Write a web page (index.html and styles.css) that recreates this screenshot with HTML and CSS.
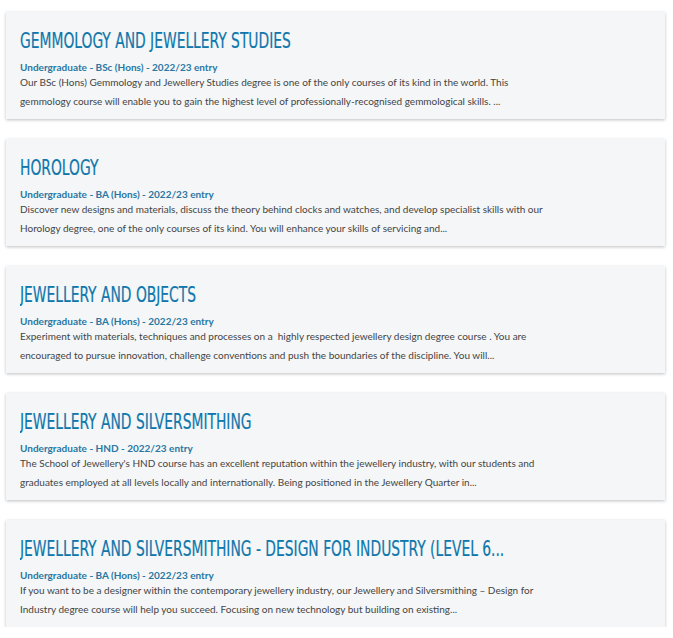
FILE: index.html
```html
<!doctype html>
<html>
  <head>
    <meta charset='utf-8'>
    <title>courses</title>
    <link rel="stylesheet" href="styles.css">
  </head>
  <body>
    <div class='results'>

      <div class='course'>
        <h2 class='course-title'><span>Gemmology and Jewellery Studies</span></h2>
        <div class='course-meta'>Undergraduate - BSc (Hons) - 2022/23 entry</div>
        <p class='course-text'>Our BSc (Hons) Gemmology and Jewellery Studies degree is one of the only courses of its kind in the world. This gemmology course will enable you to gain the highest level of professionally-recognised gemmological skills. ...</p>
      </div>

      <div class='course'>
        <h2 class='course-title'><span>Horology</span></h2>
        <div class='course-meta'>Undergraduate - BA (Hons) - 2022/23 entry</div>
        <p class='course-text'>Discover new designs and materials, discuss the theory behind clocks and watches, and develop specialist skills with our Horology degree, one of the only courses of its kind. You will enhance your skills of servicing and...</p>
      </div>

      <div class='course'>
        <h2 class='course-title'><span>Jewellery and Objects</span></h2>
        <div class='course-meta'>Undergraduate - BA (Hons) - 2022/23 entry</div>
        <p class='course-text'>Experiment with materials, techniques and processes on a&nbsp; highly respected jewellery design degree course . You are encouraged to pursue innovation, challenge conventions and push the boundaries of the discipline. You will...</p>
      </div>

      <div class='course'>
        <h2 class='course-title'><span>Jewellery and Silversmithing</span></h2>
        <div class='course-meta'>Undergraduate - HND - 2022/23 entry</div>
        <p class='course-text'>The School of Jewellery's HND course has an excellent reputation within the jewellery industry, with our students and graduates employed at all levels locally and internationally. Being positioned in the Jewellery Quarter in...</p>
      </div>

      <div class='course'>
        <h2 class='course-title'><span>Jewellery and Silversmithing - Design for Industry (Level 6...</span></h2>
        <div class='course-meta'>Undergraduate - BA (Hons) - 2022/23 entry</div>
        <p class='course-text'>If you want to be a designer within the contemporary jewellery industry, our Jewellery and Silversmithing – Design for Industry degree course will help you succeed. Focusing on new technology but building on existing...</p>
      </div>

    </div>
  </body>
</html>
```

FILE: styles.css
```css
*{
  box-sizing: border-box;
}

body {
  font-family: 'Lato', 'Liberation Sans', sans-serif;
  margin: 0;
  background: #fff;
}

.results {
  display: flex;
  flex-direction: column;
  gap: 20px;
  padding: 12px 8px 0 6px;
}

.course {
  background: #f4f6f8;
  box-shadow: 0 1px 3px rgba(0, 0, 0, 0.25);
  padding: 17px 14px 12px;
  height: 107px;
}

/* no condensed display face offline, so squeeze DejaVu Condensed */
.course-title {
  font-family: 'DejaVu Sans Condensed', 'DejaVu Sans', sans-serif;
  font-weight: normal;
  text-transform: uppercase;
  font-size: 22px;
  line-height: 24px;
  color: #0f77ab;
  margin: 0 0 8px;
  white-space: nowrap;
  overflow: hidden;
}

.course-title span {
  display: inline-block;
  transform: scaleX(0.7);
  transform-origin: left center;
  -webkit-text-stroke: 0.2px #0f77ab;
}

.course-meta {
  font-size: 10px;
  font-weight: bold;
  color: #2a77a2;
  line-height: 12px;
}

.course-text {
  font-size: 10px;
  color: #444;
  line-height: 19px;
  margin: 0;
  max-width: 530px;
}
```
